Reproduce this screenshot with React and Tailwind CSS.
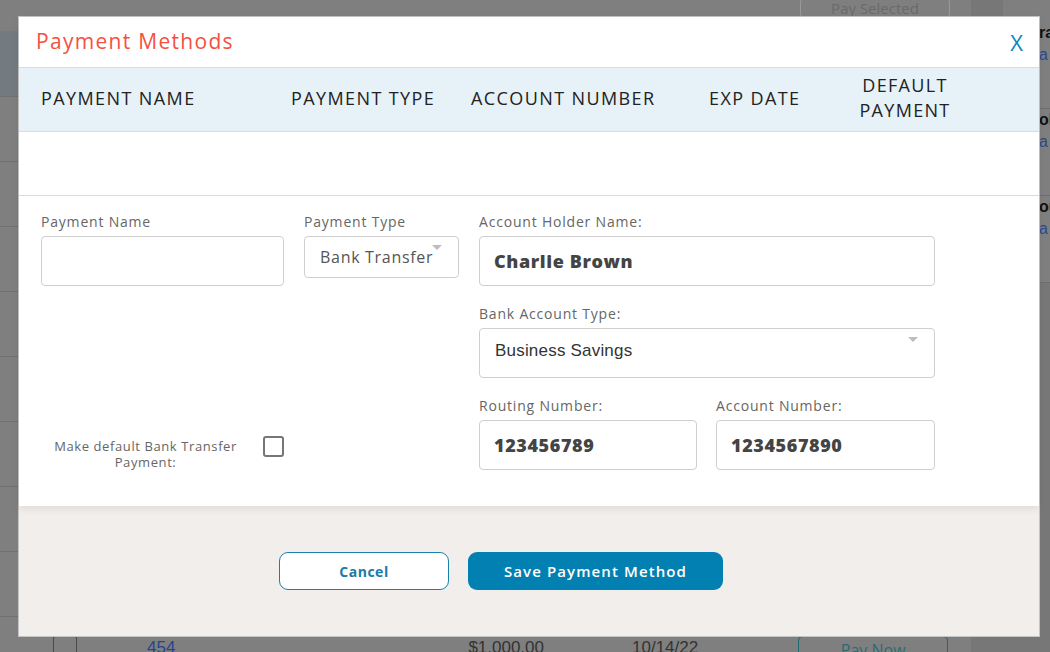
import { useState } from 'react'

const HEAD = "font-['Open_Sans',sans-serif]"
const BODY = "font-['Open_Sans',sans-serif]"

const COLS = [
  { label: 'PAYMENT NAME', cls: 'w-[250px]' },
  { label: 'PAYMENT TYPE', cls: 'w-[180px]' },
  { label: 'ACCOUNT NUMBER', cls: 'w-[238px]' },
  { label: 'EXP DATE', cls: 'w-[143px]' },
]

function Label({ children }) {
  return <div className={`${BODY} text-[14px] leading-[20px] mb-[4px] text-[#666] tracking-[0.8px]`}>{children}</div>
}

function Caret({ className }) {
  return (
    <svg className={className} width="10" height="5" viewBox="0 0 10 5">
      <path d="M0 0h10L5 5z" fill="#bdbdbd" />
    </svg>
  )
}

function BoldInput({ value, className = '' }) {
  return (
    <div className={`h-[50px] border border-[#cfcfcf] rounded-[4px] flex items-center px-[14px] ${className}`}>
      <span className={`${BODY} text-[18px] font-extrabold text-[#444] tracking-[0.6px]`}>{value}</span>
    </div>
  )
}

function Backdrop() {
  const rows = [0, 1, 2, 3, 4, 5, 6, 7]
  return (
    <div className="flex w-full h-full">
      <div className="w-[971px] shrink-0 flex flex-col">
        <div className="h-[31px] shrink-0 flex justify-end pr-[21px]">
          <div className="w-[150px] h-[20px] -mt-[2px] border border-[#9a9a9a] rounded-[4px] flex items-end justify-center">
            <span className="font-['Open_Sans',sans-serif] text-[15px] leading-[18px] text-[#6a6a6a]">Pay Selected</span>
          </div>
        </div>
        <div className="h-[66px] bg-[#737a80] border-b border-[#6f6f6f] shrink-0" />
        {rows.map(r => (
          <div key={r} className="h-[65px] border-b border-[#707070] shrink-0" />
        ))}
        <div className="flex items-start pt-[19px] shrink-0">
          <div className="ml-[53px] w-[24px] h-[24px] border border-[#4a4a4a] rounded-[2px]" />
          <span className="ml-[70px] font-['Liberation_Sans',sans-serif] text-[17px] leading-[20px] text-[#23458e] mt-[2px]">454</span>
          <span className="ml-[293px] font-['Liberation_Sans',sans-serif] text-[17px] leading-[20px] text-[#333] mt-[2px]">$1,000.00</span>
          <span className="ml-[88px] font-['Liberation_Sans',sans-serif] text-[17px] leading-[20px] text-[#333] mt-[2px]">10/14/22</span>
          <div className="ml-[100px] w-[150px] h-[24px] border border-[#1e6a70] rounded-[4px] flex justify-center">
            <span className="font-['Open_Sans',sans-serif] text-[16px] leading-[22px] text-[#2a6c72] mt-[2px]">Pay Now</span>
          </div>
        </div>
      </div>
      <div className="w-[32px] shrink-0 bg-[#777]" />
      <div className="flex-1 min-w-0 overflow-hidden flex flex-col bg-[#777]">
        <div className="bg-[#7f7f7f] pt-[22px]">
          {['ra', 'oh', 'ou'].map(t => (
            <div key={t} className="h-[87px] pl-[36px] border-b border-[#6d6d6d]">
              <div className="font-['Liberation_Sans',sans-serif] font-bold text-[16px] leading-[22px] text-[#111] whitespace-nowrap">{t}</div>
              <div className="font-['Liberation_Sans',sans-serif] text-[16px] leading-[22px] text-[#2a4a8e]">a</div>
            </div>
          ))}
        </div>
      </div>
    </div>
  )
}

export default function App() {
  const [isDefault, setIsDefault] = useState(false)
  return (
    <div className="relative w-[1050px] h-[652px] overflow-hidden bg-[#7f7f7f]">
      <Backdrop />

      <div className="absolute left-[18px] top-[16px] w-[1022px] h-[621px] bg-[#f2eeeb] border border-[#c4c4c4] flex flex-col">
        <div className="bg-white relative z-10 shadow-[0_3px_8px_rgba(0,0,0,0.08)]">
          <div className="h-[50px] flex items-center justify-between pl-[17px] pr-[16px]">
            <h2 className={`${HEAD} text-[21px] font-medium text-[#f5503f] tracking-[1.3px]`}>Payment Methods</h2>
            <button className={`${HEAD} text-[22px] font-medium text-[#0a86bf] leading-[24px]`}>X</button>
          </div>

          <div className="h-[65px] bg-[#e6f1f8] border-t border-b border-[#dcdcdc] flex items-center pl-[22px]">
            {COLS.map(c => (
              <div key={c.label} className={`${HEAD} ${c.cls} text-[18px] font-medium text-[#222] tracking-[1.4px] -mt-[2px]`}>{c.label}</div>
            ))}
            <div className={`${HEAD} w-[106px] text-center text-[18px] font-medium text-[#222] leading-[25px] tracking-[1.3px] -mt-[3px]`}>DEFAULT PAYMENT</div>
          </div>

          <div className="h-[64px] border-b border-[#dcdcdc]" />

          <div className="flex pt-[16px] pb-[36px] pl-[22px]">
            <div className="w-[243px] flex flex-col">
              <Label>Payment Name</Label>
              <div className="h-[50px] border border-[#cfcfcf] rounded-[4px]" />
              <div className="flex items-start mt-auto">
                <div className={`${BODY} w-[210px] mt-[2px] text-center text-[13px] leading-[16px] text-[#666] tracking-[0.6px]`}>
                  Make default Bank Transfer Payment:
                </div>
                <button
                  onClick={() => setIsDefault(v => !v)}
                  className="ml-[13px] w-[21px] h-[21px] border-2 border-[#767676] rounded-[3px] bg-white"
                />
              </div>
            </div>

            <div className="w-[155px] ml-[20px]">
              <Label>Payment Type</Label>
              <div className="relative h-[42px] border border-[#cfcfcf] rounded-[4px] flex items-center px-[15px]">
                <span className={`${BODY} text-[16px] text-[#555] tracking-[0.7px]`}>Bank Transfer</span>
                <Caret className="absolute right-[16px] top-[8px]" />
              </div>
            </div>

            <div className="w-[456px] ml-[20px]">
              <Label>Account Holder Name:</Label>
              <BoldInput value="Charlie Brown" />

              <div className="mt-[18px]">
                <Label>Bank Account Type:</Label>
                <div className="relative h-[50px] border border-[#cfcfcf] rounded-[4px] flex items-start pt-[9px] px-[15px]">
                  <span className="font-['Liberation_Sans',sans-serif] text-[17px] text-[#333] tracking-[0.2px]">Business Savings</span>
                  <Caret className="absolute right-[16px] top-[8px]" />
                </div>
              </div>

              <div className="mt-[18px] flex gap-[19px]">
                <div className="w-[218px]">
                  <Label>Routing Number:</Label>
                  <BoldInput value="123456789" />
                </div>
                <div className="w-[219px]">
                  <Label>Account Number:</Label>
                  <BoldInput value="1234567890" />
                </div>
              </div>
            </div>
          </div>
        </div>

        <div className="flex pt-[46px] pl-[260px] gap-[19px]">
          <button className={`${BODY} w-[170px] h-[38px] bg-white border border-[#1b7fae] rounded-[9px] text-[14px] font-bold text-[#1b7aa8] tracking-[0.5px]`}>
            Cancel
          </button>
          <button className={`${HEAD} w-[255px] h-[38px] bg-[#0380b2] rounded-[9px] text-[15px] font-semibold text-white tracking-[1.1px]`}>
            Save Payment Method
          </button>
        </div>
      </div>
    </div>
  )
}
